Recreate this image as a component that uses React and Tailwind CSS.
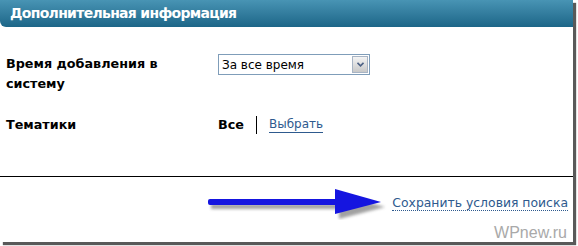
import React from 'react';

const Arrow = () => (
    <svg width="182" height="34" viewBox="0 0 182 34" className="block">
        <defs>
            <filter id="sh" x="-10%" y="-50%" width="130%" height="200%">
                <feGaussianBlur stdDeviation="1.6" />
            </filter>
        </defs>
        {/* shadow */}
        <g transform="translate(3,4)" fill="#555" opacity="0.55" filter="url(#sh)">
            <rect x="2" y="14" width="132" height="5" />
            <polygon points="130,4 176,17 130,29" />
        </g>
        <rect x="2" y="13" width="132" height="6" rx="2" fill="#1515e0" />
        <polygon points="129,3 175,16 129,28" fill="#1515e0" />
    </svg>
);

const App = () => {
    return (
        <div className="w-[578px] h-[246px] bg-white" style={{ fontFamily: '"DejaVu Sans", Tahoma, sans-serif' }}>
            <div className="w-[573px] h-[242px] bg-white flex flex-col shadow-[3px_3px_1px_rgba(0,0,0,0.65)]">
                <div className="h-[27px] shrink-0 bg-gradient-to-b from-[#4894b4] to-[#1c6688] rounded-bl-[6px] flex items-center pl-[10px]">
                    <span className="text-white font-bold text-[14px] tracking-[-0.7px]">Дополнительная информация</span>
                </div>

                <div className="flex flex-col pl-[6px] pt-[27px] h-[154px] border-b border-black">
                    <div className="flex">
                        <div className="w-[212px] text-[12.75px] font-bold leading-[20px] text-black">
                            Время добавления в<br />систему
                        </div>
                        <div className="h-[21px] w-[152px] border border-[#7f9db9] flex items-center">
                            <span className="flex-1 pl-[3px] text-[12px] text-black">За все время</span>
                            <div className="w-[16px] h-[17px] mr-[1px] border border-[#a8b4c4] bg-gradient-to-b from-[#f4f4f4] to-[#c8c8c8] flex items-center justify-center">
                                <svg width="7" height="5" viewBox="0 0 7 5">
                                    <polyline points="0.5,0.8 3.5,3.8 6.5,0.8" fill="none" stroke="#4d6185" strokeWidth="1.6" />
                                </svg>
                            </div>
                        </div>
                    </div>
                    <div className="flex items-center mt-[21px]">
                        <div className="w-[212px] text-[12.75px] font-bold text-black">Тематики</div>
                        <span className="text-[12.75px] font-bold text-black">Все</span>
                        <span className="w-px h-[18px] bg-black mx-[12px]"></span>
                        <a className="text-[12px] text-[#2e5a8e] border-b border-[#2e5a8e] leading-[15px]">Выбрать</a>
                    </div>
                </div>

                <div className="flex justify-end items-center pr-[5px] mt-[9px]">
                    <Arrow />
                    <a className="ml-[4px] text-[12.4px] text-[#2e5a8e] leading-[15px] border-b border-dotted border-[#2e5a8e]">Сохранить условия поиска</a>
                </div>
                <div className="flex justify-end pr-[6px] mt-[4px]">
                    <span className="text-[16px] text-[#a9a9a9] leading-[18px]" style={{ fontFamily: '"Liberation Sans", Arial, sans-serif' }}>WPnew.ru</span>
                </div>
            </div>
        </div>
    );
};

export default App;
